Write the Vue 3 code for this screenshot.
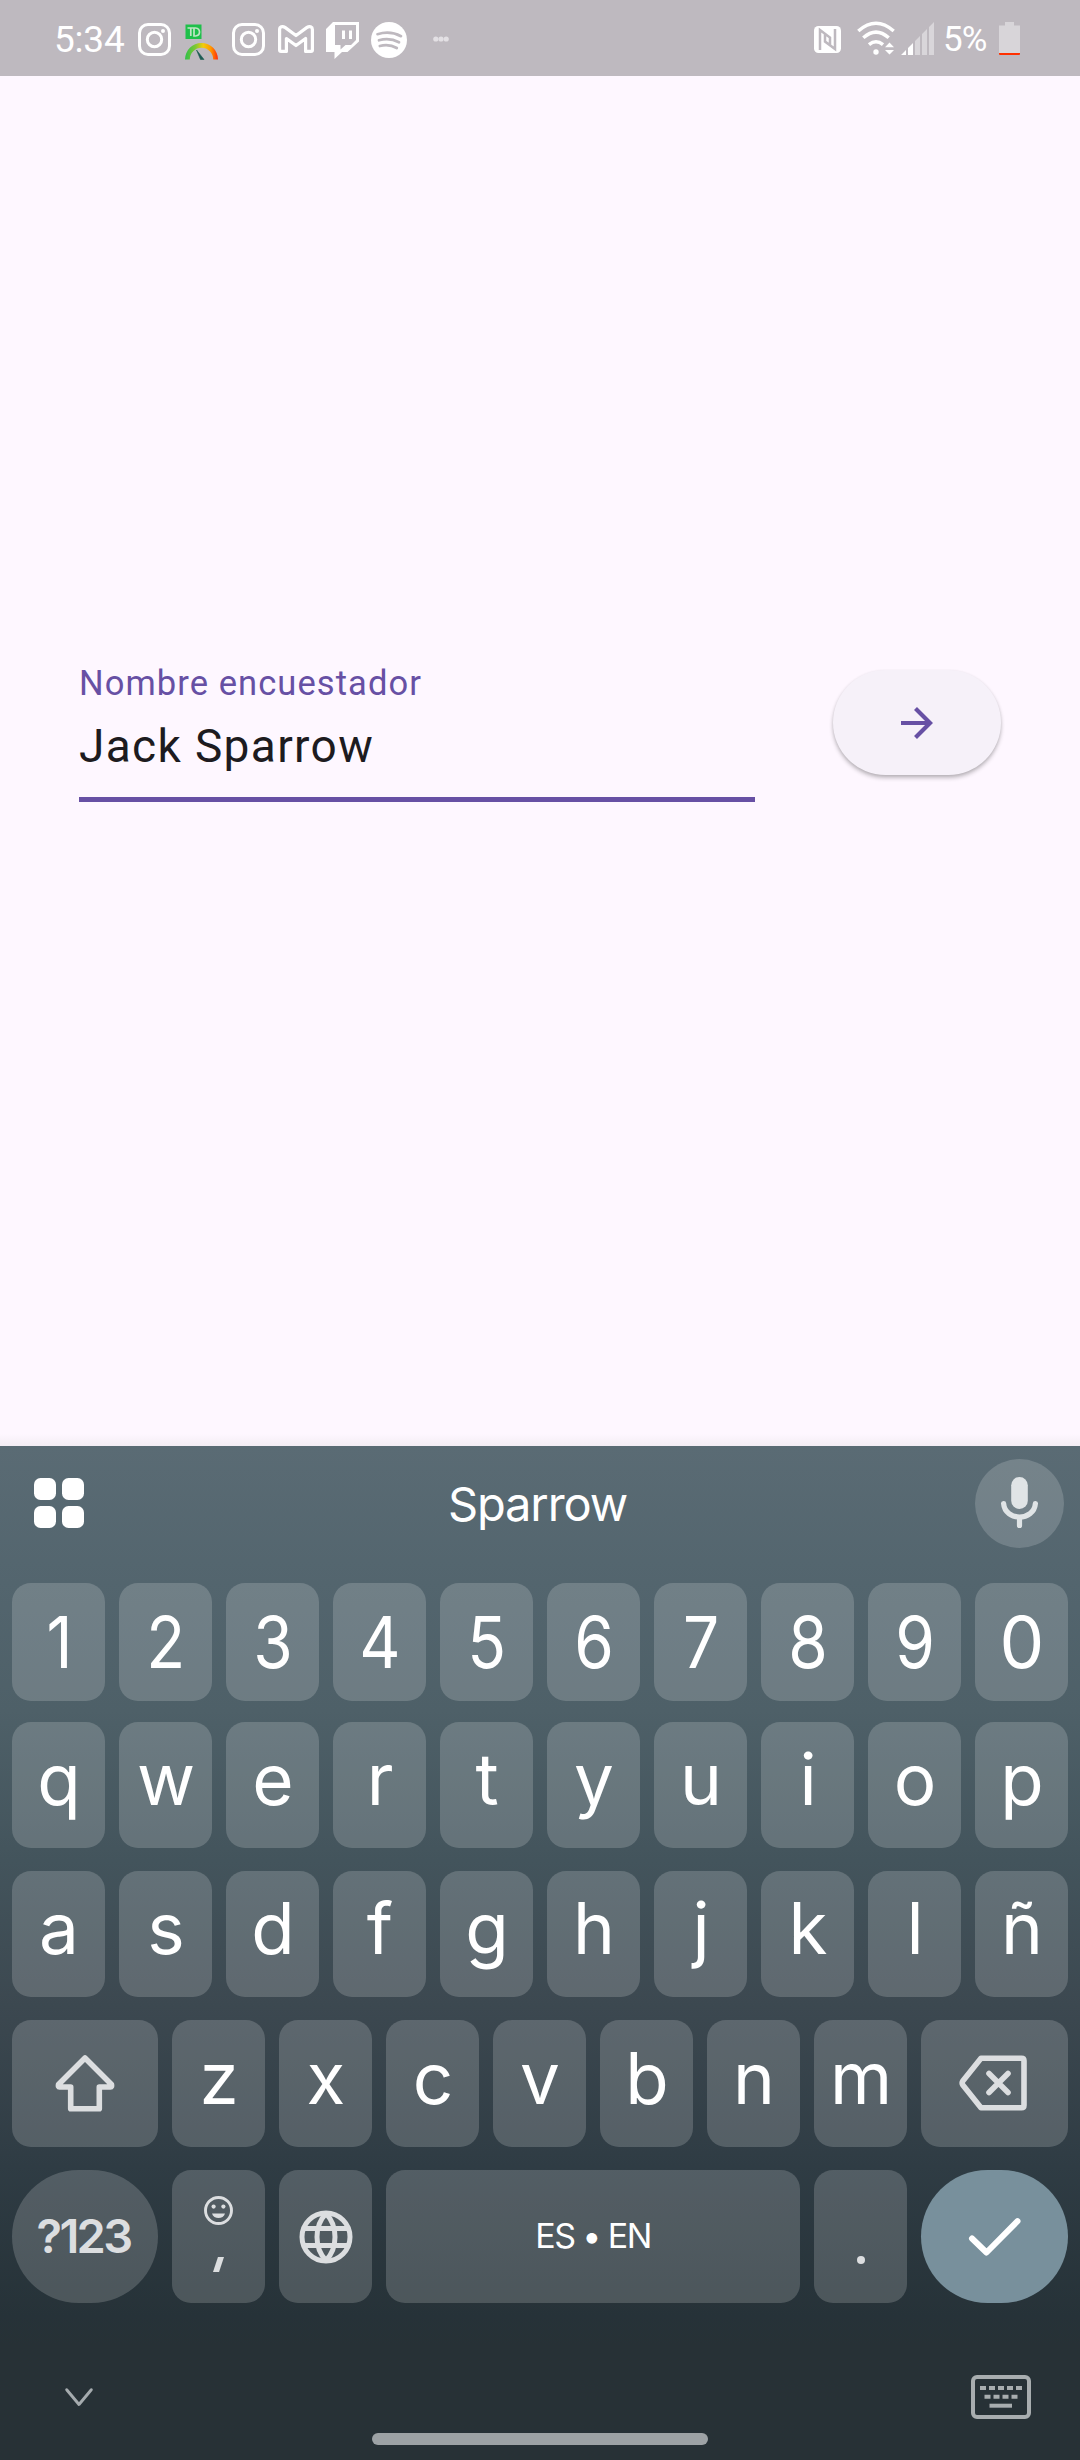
<script setup>
const digits = '1234567890'.split('')
const top = 'qwertyuiop'.split('')
const home = 'asdfghjklñ'.split('')
const bottom = 'zxcvbnm'.split('')
</script>

<template>
  <div class="phone">
    <header class="status">
      <span class="clock">5:34</span>
      <svg class="ig" viewBox="0 0 33 33" fill="none" stroke="#fff">
        <rect x="1.5" y="1.5" width="30" height="30" rx="8.5" stroke-width="3" />
        <circle cx="16.5" cy="16.5" r="7.2" stroke-width="3" />
        <circle cx="25" cy="8" r="2" fill="#fff" stroke="none" />
      </svg>
      <svg class="td" viewBox="0 0 33 36">
        <rect x="0.5" y="0.5" width="16" height="14.5" fill="#1ec04a" />
        <path d="M2.500 4H9M5.800 4v8M9 4v8h1.500q4-.4 4-4t-4-4H7.800" fill="none" stroke="#bfe5c4" stroke-width="1.700" />
        <defs>
          <linearGradient id="gauge" x1="0" x2="1" y1="0" y2="0">
            <stop offset="0" stop-color="#2fbf4a" />
            <stop offset="0.32" stop-color="#7fc832" />
            <stop offset="0.55" stop-color="#f2cc0c" />
            <stop offset="0.78" stop-color="#ff9a00" />
            <stop offset="1" stop-color="#ff2a0a" />
          </linearGradient>
        </defs>
        <path d="M0 35.500A16.500 16.500 0 0 1 33 35.500H28.200A11.700 11.700 0 0 0 4.800 35.500Z" fill="url(#gauge)" />
        <path d="M11.500 26l7.500 9.500h-3.500z" fill="#1d5c53" stroke="#1d5c53" stroke-width=".6" />
      </svg>
      <svg class="ig second" viewBox="0 0 33 33" fill="none" stroke="#fff">
        <rect x="1.500" y="1.500" width="30" height="30" rx="8.500" stroke-width="3" />
        <circle cx="16.500" cy="16.500" r="7.200" stroke-width="3" />
        <circle cx="25" cy="8" r="2" fill="#fff" stroke="none" />
      </svg>
      <svg class="gmail" viewBox="0 0 36 28">
        <path d="M1.600 4.500V25q0 1.400 1.400 1.400H8.400V13.500L18 20.500 27.600 13.500V26.400H33q1.400 0 1.400-1.400V4.500C34.400 1.800 31.600.600 29 2.400L18 10.500 7 2.400C4.400.600 1.600 1.800 1.600 4.500Z" fill="none" stroke="#fff" stroke-width="3.200" stroke-linejoin="round" />
      </svg>
      <svg class="twitch" viewBox="0 0 33 37">
        <path fill-rule="evenodd" fill="#fff" d="M7 0H33V19.500L21.500 30H16L8.500 37V30H0V7ZM9 3V23H14.500V27.500L19.500 23H25L30 18V3ZM16 8.500H19V17H16ZM23 8.500H26V17H23Z" />
      </svg>
      <svg class="spotify" viewBox="0 0 36 36">
        <circle cx="18" cy="18" r="18" fill="#fff" />
        <path d="M6.500 12.200Q19 8.300 30 14.200M8 18.300Q18.500 15.200 28 20.300M8.800 24Q18 21.600 25.800 26" fill="none" stroke="#beb9bf" stroke-width="2.700" stroke-linecap="round" />
      </svg>
      <svg class="more" viewBox="0 0 16 6" fill="#e3e0e4">
        <circle cx="2.800" cy="3" r="2.600" /><circle cx="8" cy="3" r="2.600" /><circle cx="13.200" cy="3" r="2.600" />
      </svg>
      <span class="spacer"></span>
      <svg class="nfc" viewBox="0 0 27 27">
        <rect width="27" height="27" rx="4.500" fill="#fff" />
        <path d="M6 24V4L16 11.500V19M21 3V23L11 15.500V8" fill="none" stroke="#beb9bf" stroke-width="2.500" />
      </svg>
      <svg class="wifi" viewBox="0 0 38 33">
        <path d="M1.300 9Q19-6.500 36.700 9" fill="none" stroke="#fff" stroke-width="3.500" />
        <path d="M6.300 15.800Q19 4.300 31.700 15.800M12 22.700Q19 16.800 26 22.700" fill="none" stroke="#fff" stroke-width="3.500" />
        <circle cx="19" cy="30" r="2.700" fill="#fff" />
        <path d="M32.500 20.500L37 25.300H28ZM32.500 32.500L28 28H37Z" fill="#fff" />
      </svg>
      <svg class="signal" viewBox="0 0 33 33">
        <path d="M0 33L5 28V33ZM7 26L12 21V33H7Z" fill="#fff" />
        <path d="M14 19L19 14V33H14ZM21 12L26 7V33H21ZM28 5L33 0V33H28Z" fill="#d9d6da" />
      </svg>
      <span class="percent">5%</span>
      <svg class="battery" viewBox="0 0 21 33">
        <path d="M6 0H15V3.500H21V31H0V3.500H6Z" fill="#d8d5d9" />
        <path d="M0 31H21V32Q21 33 20 33H1Q0 33 0 32Z" fill="#ff3000" />
      </svg>
    </header>

    <main class="content">
      <label class="field">
        <span class="label">Nombre encuestador</span>
        <span class="value">Jack Sparrow</span>
      </label>
      <button class="next" type="button" aria-label="Siguiente">
        <svg viewBox="0 0 32 32" fill="none" stroke="#6750a4" stroke-width="4.200">
          <path d="M0 16H28M14.500 1.500L29 16 14.500 30.500" />
        </svg>
      </button>
    </main>

    <section class="keyboard">
      <div class="suggest">
        <svg class="apps" viewBox="0 0 50 50" fill="#fff">
          <rect width="22" height="22" rx="6.500" /><rect x="28" width="22" height="22" rx="6.500" />
          <rect y="28" width="22" height="22" rx="6.500" /><rect x="28" y="28" width="22" height="22" rx="6.500" />
        </svg>
        <span class="word">Sparrow</span>
        <span class="mic">
          <svg viewBox="0 0 37 51">
            <rect x="10.200" y="0" width="16.600" height="32" rx="8.300" fill="#e0e4e6" />
            <path d="M2.600 26.500C4 44.500 33 44.500 34.400 26.500M18.500 41V48.500" fill="none" stroke="#e0e4e6" stroke-width="5.200" stroke-linecap="round" />
          </svg>
        </span>
      </div>

      <div class="row digits">
        <span v-for="k in digits" :key="k" class="key"><b :class="{ zero: k === '0' }">{{ k }}</b></span>
      </div>
      <div class="row letters">
        <span v-for="k in top" :key="k" class="key">{{ k }}</span>
      </div>
      <div class="row letters home">
        <span v-for="k in home" :key="k" class="key">{{ k }}</span>
      </div>
      <div class="row letters low">
        <span class="key wide icon">
          <svg class="shift" viewBox="0 0 60 58" fill="none" stroke="#dcdee0" stroke-width="5.600" stroke-linejoin="round">
            <path d="M30 4L56.500 30.500Q57 33 55.500 33H44.300V54.700H15.700V33H4.500Q3 33 3.500 30.500Z" />
          </svg>
        </span>
        <span v-for="k in bottom" :key="k" class="key">{{ k }}</span>
        <span class="key wide icon">
          <svg class="back" viewBox="0 0 68 56" fill="none" stroke="#dcdee0" stroke-linejoin="round">
            <path d="M22 3.200H62.500Q65 3.200 65 5.700V50.300Q65 52.800 62.500 52.800H22L3.800 30Q2.500 28 3.800 26Z" stroke-width="5.600" />
            <path d="M30 18.500L49 37.500M49 18.500L30 37.500" stroke-width="5.600" stroke-linecap="round" />
          </svg>
        </span>
      </div>
      <div class="row last">
        <span class="key wide round sym">?123</span>
        <span class="key comma">
          <svg viewBox="0 0 29 29">
            <circle cx="14.500" cy="14.500" r="13" fill="none" stroke="#dcdee0" stroke-width="2.900" />
            <circle cx="9.600" cy="10.600" r="2.100" fill="#dcdee0" /><circle cx="19.400" cy="10.600" r="2.100" fill="#dcdee0" />
            <path d="M8 17.500H21C19.500 23.500 9.500 23.500 8 17.500Z" fill="#dcdee0" />
          </svg>
          <i class="tick"></i>
        </span>
        <span class="key">
          <svg class="globe" viewBox="0 0 54 54" fill="none" stroke="#dcdee0" stroke-width="5">
            <circle cx="27" cy="27" r="24" />
            <path d="M5 18.500H49M5 35.500H49M27 3.500C15 16 15 38 27 50.500M27 3.500C39 16 39 38 27 50.500" />
          </svg>
        </span>
        <span class="key space">ES • EN</span>
        <span class="key period"><i></i></span>
        <span class="key wide round enter">
          <svg viewBox="0 0 52 38" fill="none" stroke="#fff" stroke-width="6" stroke-linecap="round" stroke-linejoin="round">
            <path d="M3 20.500L17.500 34.500 48.500 3.200" />
          </svg>
        </span>
      </div>

      <footer class="nav">
        <svg class="chev" viewBox="0 0 28 19" fill="none" stroke="#a5abae" stroke-width="2.900" stroke-linecap="round" stroke-linejoin="round">
          <path d="M1.700 1.700L14 16.500 26.300 1.700" />
        </svg>
        <svg class="kb" viewBox="0 0 60 44" fill="none" stroke="#a8adaf">
          <rect x="2" y="2" width="56" height="40" rx="4" stroke-width="4" />
          <path d="M9 12.900H51" stroke-width="4" stroke-dasharray="6 3" />
          <path d="M13.500 21.700H46.500" stroke-width="4" stroke-dasharray="6 3" />
          <path d="M18.500 30.700H41" stroke-width="4" />
        </svg>
      </footer>
      <div class="handle"></div>
    </section>
  </div>
</template>

<style>
body { margin: 0; background: #fef7ff; }
</style>

<style scoped>
* { box-sizing: border-box; }
svg { display: block; flex: none; overflow: visible; }
.phone {
  width: 1080px;
  height: 2460px;
  display: flex;
  flex-direction: column;
  overflow: hidden;
  background: #fef7ff;
  font-family: Roboto, sans-serif;
}
.status {
  height: 76px;
  flex: none;
  display: flex;
  align-items: flex-start;
  padding-left: 54px;
  padding-right: 60px;
  background: #beb9bf;
  color: #fff;
}
.clock { width: 84px; font-size: 37px; line-height: 40px; margin-top: 20px; white-space: nowrap; letter-spacing: -0.200px; }
.ig { width: 33px; height: 33px; margin-top: 23px; }
.td { width: 33px; height: 36px; margin: 23.500px 0 0 14px; }
.second { margin-left: 14px; }
.gmail { width: 36px; height: 28px; margin: 25px 0 0 12.500px; }
.twitch { width: 33px; height: 37px; margin: 21.500px 0 0 12.500px; }
.spotify { width: 36px; height: 36px; margin: 21.500px 0 0 12px; }
.more { width: 16px; height: 6px; margin: 36px 0 0 25.500px; }
.spacer { flex: 1; }
.nfc { width: 27px; height: 27px; margin: 26px 16px 0 0; }
.wifi { width: 38px; height: 33px; margin: 22px 6px 0 0; }
.signal { width: 33px; height: 33px; margin: 22px 9px 0 0; }
.percent { width: 56px; font-size: 35px; line-height: 40px; margin-top: 20px; letter-spacing: -1px; white-space: nowrap; }
.battery { width: 21px; height: 33px; margin-top: 22px; }

.content {
  height: 1370px;
  flex: none;
  display: flex;
  align-items: flex-start;
  justify-content: space-between;
  padding: 587px 79px 0 78.500px;
  background: linear-gradient(to bottom, transparent 1358px, #f3edf4 1370px);
}
.field {
  width: 676px;
  height: 138.500px;
  display: flex;
  flex-direction: column;
  border-bottom: 5px solid #6750a4;
  white-space: nowrap;
}
.label { font-size: 34.500px; line-height: 40px; letter-spacing: 1.080px; color: #6750a4; padding-left: 0.500px; }
.value { font-size: 46px; line-height: 54px; letter-spacing: 1.350px; color: #1d1b20; margin-top: 16px; padding-left: 0.500px; }
.next {
  width: 168px;
  height: 105px;
  margin-top: 7px;
  border: 0;
  border-radius: 53px;
  display: flex;
  align-items: center;
  justify-content: center;
  background: #f6f1f9;
  box-shadow: 0 3px 4px rgba(0, 0, 0, 0.24), 0 1px 3px rgba(0, 0, 0, 0.080);
}
.next svg { width: 32px; height: 32px; }

.keyboard {
  height: 1014px;
  flex: none;
  display: flex;
  flex-direction: column;
  background: linear-gradient(to bottom, #5a6b74 0, #53656e 137px, #4e6068 264px, #43545c 415px, #3c4850 560px, #2f3c44 720px, #263238 870px, #273136 900px);
  color: #fff;
  font-family: Inter, sans-serif;
}
.suggest {
  height: 137px;
  display: flex;
  align-items: flex-start;
  justify-content: space-between;
  padding: 0 16px 0 34px;
}
.apps { width: 50px; height: 50px; margin-top: 32px; }
.word { width: 200px; margin-top: 28px; margin-left: 16px; font-size: 47px; line-height: 60px; letter-spacing: -1.100px; text-align: center; }
.mic { width: 89px; height: 89px; margin-top: 13px; border-radius: 50%; display: flex; justify-content: center; padding-top: 18px; background: rgba(255, 255, 255, 0.170); }
.mic svg { width: 37px; height: 51px; }

.row { display: flex; gap: 14px; padding: 0 12px; flex: none; font-size: 71px; line-height: 1; }
.key {
  flex: 1 1 0;
  min-width: 0;
  display: flex;
  align-items: center;
  justify-content: center;
  border-radius: 19px;
  background: rgba(255, 255, 255, 0.175);
}
.key b { font-weight: 400; transform: scaleX(0.9); margin-left: 1px; }
.key .zero { transform: scaleX(1); }
.digits { height: 118px; }
.letters { height: 126px; margin-top: 21px; }
.letters .key { padding-bottom: 11px; padding-left: 1px; }
.home { margin-top: 23px; }
.low { height: 127px; margin-top: 23px; }
.letters .icon { padding-bottom: 1px; padding-left: 0; }
.wide { flex: 0 0 146px; }
.wide:last-child { flex-basis: 147px; }
.shift { width: 60px; height: 58px; }
.back { width: 68px; height: 56px; margin-left: -3px; }
.last { height: 133px; margin-top: 23px; }
.round { border-radius: 66.500px; }
.sym { font-size: 47px; font-weight: 600; letter-spacing: -2.700px; color: #dcdee0; padding: 0 3px 3px 0; }
.comma { flex-direction: column; justify-content: flex-start; padding-top: 26px; }
.comma svg { width: 29px; height: 29px; }
.tick { width: 11px; height: 15px; margin-top: 32px; background: #dcdee0; clip-path: polygon(45% 0, 100% 0, 55% 100%, 0 100%); }
.globe { width: 54px; height: 54px; }
.space { flex: 0 0 414px; font-size: 34px; letter-spacing: -1.600px; padding-bottom: 2px; }
.period { align-items: flex-start; padding-top: 86px; }
.period i { width: 8px; height: 8px; border-radius: 50%; background: #dcdee0; }
.enter { background: #78909c; }
.enter svg { width: 52px; height: 38px; }

.nav { display: flex; justify-content: space-between; height: 130px; flex: none; padding: 0 49px 0 65px; }
.chev { width: 28px; height: 19px; margin-top: 85px; }
.kb { width: 60px; height: 44px; margin-top: 72px; }
.handle { width: 336px; height: 12px; flex: none; border-radius: 6px; background: #9da2a5; margin: 0 auto; }
</style>
